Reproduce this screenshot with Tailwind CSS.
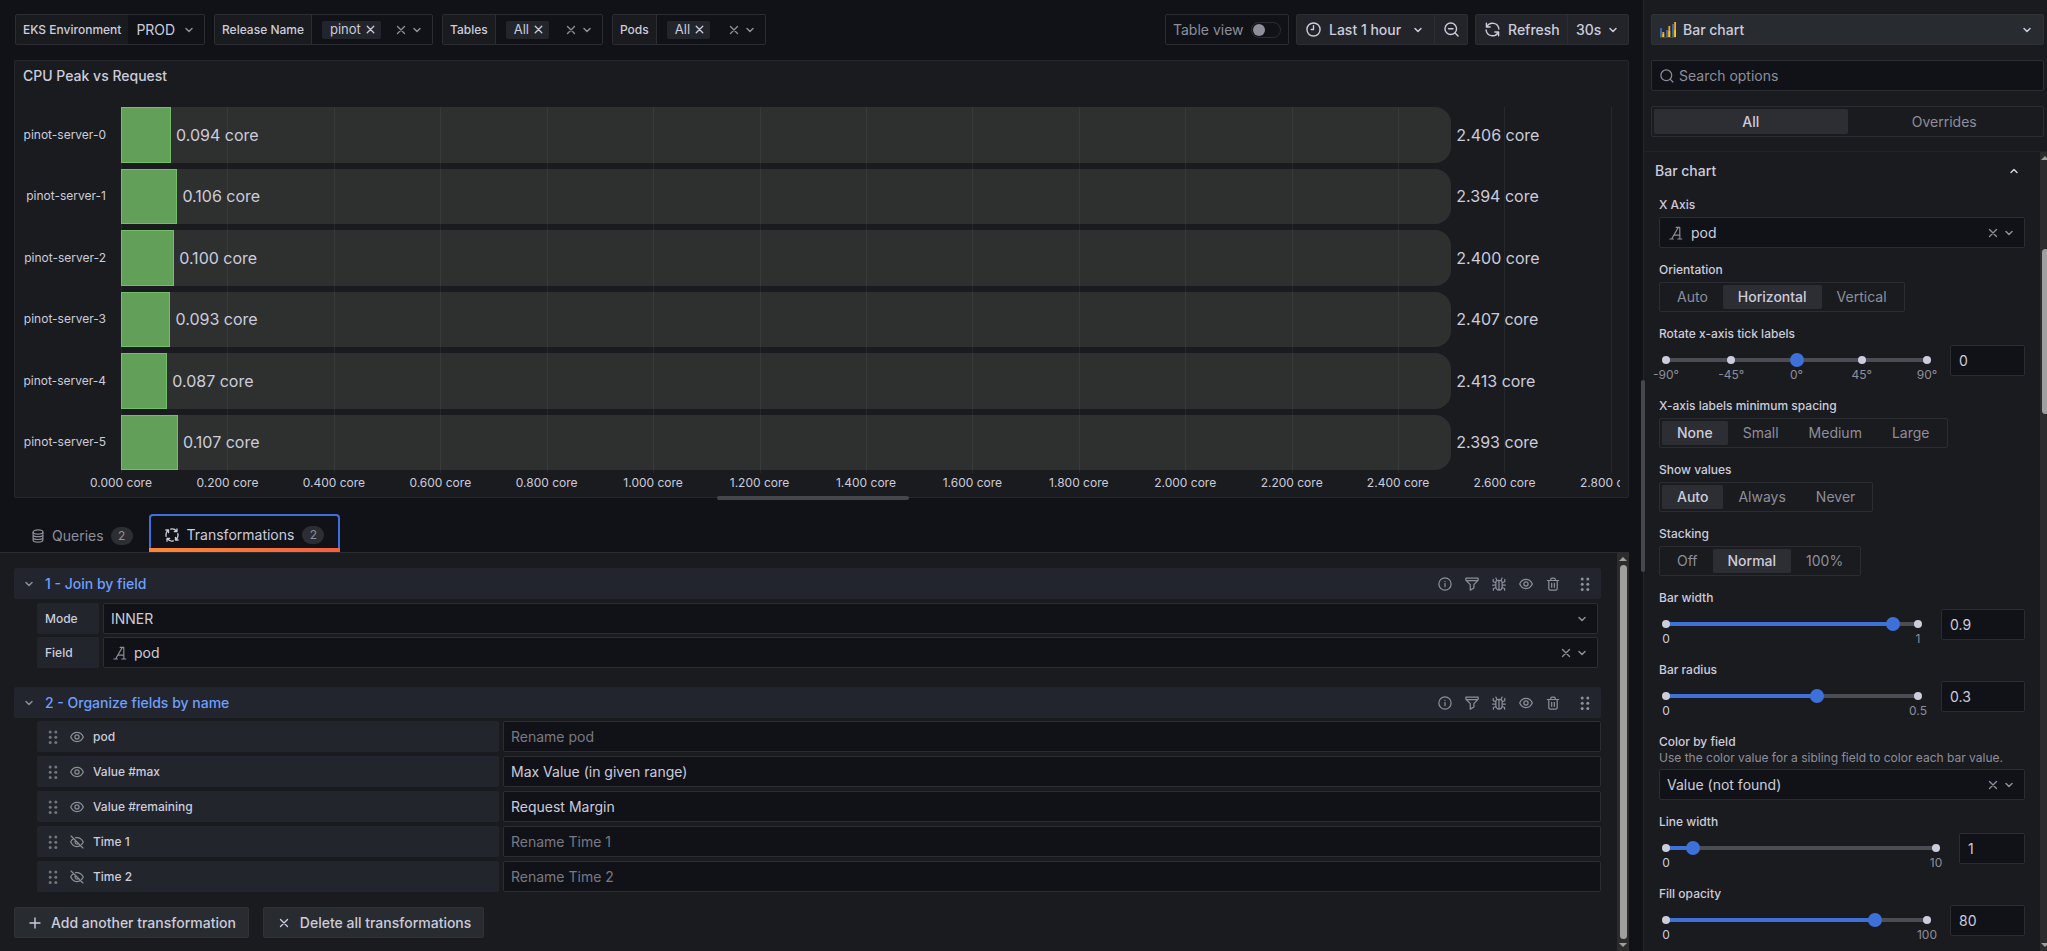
<!DOCTYPE html>
<html lang="en">

<head>
    <meta charset="UTF-8" />
    <meta name="viewport" content="width=device-width, initial-scale=1" />
    <title>CPU Peak vs Request - Edit panel</title>
    <script src="https://cdn.jsdelivr.net/npm/@tailwindcss/browser@4"></script>
</head>

<body class="h-screen overflow-hidden bg-[#111217] font-[Inter,'Liberation_Sans',sans-serif] text-sm text-[#ccccdc]">

    <!-- Icon sprite -->
    <svg class="hidden" xmlns="http://www.w3.org/2000/svg">
        <symbol id="chevron" viewBox="0 0 16 16" fill="none" stroke="currentColor" stroke-width="1.5" stroke-linecap="round" stroke-linejoin="round"><path d="M5 6.5l3 3 3-3" /></symbol>
        <symbol id="chevron-up" viewBox="0 0 16 16" fill="none" stroke="currentColor" stroke-width="1.5" stroke-linecap="round" stroke-linejoin="round"><path d="M5 9.5l3-3 3 3" /></symbol>
        <symbol id="times" viewBox="0 0 16 16" fill="none" stroke="currentColor" stroke-width="1.4" stroke-linecap="round"><path d="M4.5 4.5l7 7M11.5 4.5l-7 7" /></symbol>
        <symbol id="plus" viewBox="0 0 16 16" fill="none" stroke="currentColor" stroke-width="1.4" stroke-linecap="round"><path d="M8 3v10M3 8h10" /></symbol>
        <symbol id="clock" viewBox="0 0 16 16" fill="none" stroke="currentColor" stroke-width="1.5" stroke-linecap="round" stroke-linejoin="round"><circle cx="8" cy="8" r="7" /><path d="M8 4v4H5.6" /></symbol>
        <symbol id="zoom-out" viewBox="0 0 16 16" fill="none" stroke="currentColor" stroke-width="1.5" stroke-linecap="round"><circle cx="7.2" cy="7.2" r="6.2" /><path d="M11.8 11.8l3.2 3.2M4.8 7.2h4.8" /></symbol>
        <symbol id="search" viewBox="0 0 16 16" fill="none" stroke="currentColor" stroke-width="1.4" stroke-linecap="round"><circle cx="7.2" cy="7.2" r="6.2" /><path d="M11.8 11.8l3 3" /></symbol>
        <symbol id="sync" viewBox="0 0 16 16" fill="none" stroke="currentColor" stroke-width="1.5" stroke-linecap="round" stroke-linejoin="round"><path d="M1.5 1.3v4h4M14.5 14.7v-4h-4M2 5A6.8 6.8 0 0 1 14.8 7.5M14 11A6.8 6.8 0 0 1 1.2 8.5" /></symbol>
        <symbol id="database" viewBox="0 0 16 16" fill="none" stroke="currentColor" stroke-width="1.4"><ellipse cx="8" cy="3.4" rx="5.6" ry="2.4" /><path d="M2.4 3.4v9.2c0 1.3 2.5 2.4 5.6 2.4s5.6-1.1 5.6-2.4V3.4M2.4 6.6c0 1.2 2.5 2.2 5.6 2.2s5.6-1 5.6-2.2M2.4 9.8c0 1.2 2.5 2.2 5.6 2.2s5.6-1 5.6-2.2" /></symbol>
        <symbol id="process" viewBox="0 0 16 16" fill="none" stroke="currentColor" stroke-width="1.5" stroke-linecap="round" stroke-linejoin="round"><path d="M1.3 9.5C.7 6.9 1.7 4.3 3.6 2.7M1 2.3h3v3M6.5 1.3c2.6-.6 5.2.4 6.8 2.3M13.7 1v3h-3M14.7 6.5c.6 2.6-.4 5.2-2.3 6.8M15 13.7h-3v-3M9.5 14.7c-2.6.6-5.2-.4-6.8-2.3M2.3 15v-3h3" /></symbol>
        <symbol id="info" viewBox="0 0 16 16" fill="none" stroke="currentColor" stroke-width="1.4" stroke-linecap="round"><circle cx="8" cy="8" r="7" /><path d="M8 7.4v3.6M8 5v.1" /></symbol>
        <symbol id="filter" viewBox="0 0 16 16" fill="none" stroke="currentColor" stroke-width="1.4" stroke-linecap="round" stroke-linejoin="round"><path d="M1 1.2h14v2.4L10.2 8.8v3.8L6 15V8.8L1 3.6zM1.4 4.2h13.2" /></symbol>
        <symbol id="bug" viewBox="0 0 16 16" fill="none" stroke="currentColor" stroke-width="1.4" stroke-linecap="round" stroke-linejoin="round"><path d="M4.4 6c0-1.4 1.1-2.2 3.6-2.2s3.6.8 3.6 2.2v4.8c0 2.5-1.5 4.1-3.6 4.1s-3.6-1.6-3.6-4.1zM8 3.8v11M5.6 3.8L4.4 1.2M10.4 3.8l1.2-2.6M4.4 6.6L1.4 5.4V2.8M11.6 6.6l3-1.2V2.8M4.4 9.3H.8M11.6 9.3h3.6M4.6 12l-3 1.2V15M11.4 12l3 1.2V15" /></symbol>
        <symbol id="eye" viewBox="0 0 16 16" fill="none" stroke="currentColor" stroke-width="1.4" stroke-linejoin="round"><path d="M.8 8C2.3 4.6 5 2.8 8 2.8S13.7 4.6 15.2 8C13.7 11.4 11 13.2 8 13.2S2.3 11.4.8 8z" /><circle cx="8" cy="8" r="2.4" /></symbol>
        <symbol id="eye-slash" viewBox="0 0 16 16" fill="none" stroke="currentColor" stroke-width="1.4" stroke-linecap="round" stroke-linejoin="round"><path d="M1.2 1.2l13.6 13.6M6.4 3c3.7-.6 6.9 1.2 8.8 5-.5 1.1-1.2 2-2 2.8M3.7 4.3C2.5 5.2 1.5 6.5.8 8c2.1 4.2 6.1 6.1 10.3 4.5M6.2 6.4a2.4 2.4 0 0 0 3.3 3.4" /></symbol>
        <symbol id="trash" viewBox="0 0 16 16" fill="none" stroke="currentColor" stroke-width="1.4" stroke-linecap="round" stroke-linejoin="round"><path d="M1.5 4h13M3.2 4v9.2c0 1.1.7 1.8 1.8 1.8h6c1.1 0 1.8-.7 1.8-1.8V4M5.4 4V2.8c0-1 .6-1.6 1.6-1.6h2c1 0 1.6.6 1.6 1.6V4M6.5 7.2v4.6M9.5 7.2v4.6" /></symbol>
        <symbol id="drag" viewBox="0 0 16 16" fill="currentColor"><circle cx="5.2" cy="3" r="1.5" /><circle cx="10.8" cy="3" r="1.5" /><circle cx="5.2" cy="8.2" r="1.5" /><circle cx="10.8" cy="8.2" r="1.5" /><circle cx="5.2" cy="13.4" r="1.5" /><circle cx="10.8" cy="13.4" r="1.5" /></symbol>
        <symbol id="string-type" viewBox="0 0 16 16" fill="none" stroke="currentColor" stroke-width="1.3" stroke-linecap="round" stroke-linejoin="round"><path d="M1 14.8h4M10 14.8h4.6M3 14.8L10.6 1.6h1.7L12.4 14.8M8.2 1.6h4.1M5.6 10.4h6.8" /></symbol>
        <symbol id="barchart" viewBox="0 0 16 16"><path fill="#3865ab" d="M0 6h2v9H0zM6 8h2v7H6zM12 2h2v13h-2z" /><path fill="#f5a623" d="M2.4 10h1.8v5H2.4zM8.4 4h1.8v11H8.4zM14.2 0H16v15h-1.8z" /><path fill="#f2cc0c" d="M2.4 12h1.8v3H2.4zM8.4 9h1.8v6H8.4zM14.2 8H16v7h-1.8z" /><path fill="#2b4a80" d="M0 15h16v1H0z" /></symbol>
    </svg>

    <div class="flex h-full">

        <!-- Left side: toolbar, panel, transformations -->
        <main class="flex min-w-0 flex-1 flex-col">

            <!-- Toolbar -->
            <header class="mt-[14px] flex h-[31px] shrink-0 items-stretch justify-between whitespace-nowrap pl-[15px] pr-[14px]">
                <div class="flex gap-[9px]">
                    <div class="flex w-[190px] rounded-xs border border-[#2c2d33]">
                        <label for="env" class="flex items-center bg-[#1a1b1f] px-[7px] text-xs font-medium">EKS Environment</label>
                        <select id="env" class="min-w-0 flex-1 appearance-none bg-transparent pl-2 outline-none">
                            <option>PROD</option>
                        </select>
                        <svg class="mr-[7px] size-4 self-center text-[#8e8e9b]"><use href="#chevron" /></svg>
                    </div>
                    <div class="flex w-[219px] rounded-xs border border-[#2c2d33]">
                        <span class="flex items-center border-r border-[#2c2d33] bg-[#1a1b1f] px-[7px] text-xs font-medium">Release Name</span>
                        <div class="flex flex-1 items-center pl-[10px] pr-[7px] text-[#8e8e9b]">
                            <button class="flex h-[18px] items-center gap-[2px] rounded-xs bg-[#22252b] pl-2 pr-[3px] text-[13px] text-[#ccccdc]">pinot <svg class="size-[15px]"><use href="#times" /></svg></button>
                            <button class="ml-auto" aria-label="Clear release name"><svg class="size-4"><use href="#times" /></svg></button>
                            <button aria-label="Open release name"><svg class="size-4"><use href="#chevron" /></svg></button>
                        </div>
                    </div>
                    <div class="flex w-[161px] rounded-xs border border-[#2c2d33]">
                        <span class="flex items-center border-r border-[#2c2d33] bg-[#1a1b1f] px-[7px] text-xs font-medium">Tables</span>
                        <div class="flex flex-1 items-center pl-[10px] pr-[7px] text-[#8e8e9b]">
                            <button class="flex h-[18px] items-center gap-[2px] rounded-xs bg-[#22252b] pl-2 pr-[3px] text-[13px] text-[#ccccdc]">All <svg class="size-[15px]"><use href="#times" /></svg></button>
                            <button class="ml-auto" aria-label="Clear tables"><svg class="size-4"><use href="#times" /></svg></button>
                            <button aria-label="Open tables"><svg class="size-4"><use href="#chevron" /></svg></button>
                        </div>
                    </div>
                    <div class="flex w-[154px] rounded-xs border border-[#2c2d33]">
                        <span class="flex items-center border-r border-[#2c2d33] bg-[#1a1b1f] px-[7px] text-xs font-medium">Pods</span>
                        <div class="flex flex-1 items-center pl-[10px] pr-[7px] text-[#8e8e9b]">
                            <button class="flex h-[18px] items-center gap-[2px] rounded-xs bg-[#22252b] pl-2 pr-[3px] text-[13px] text-[#ccccdc]">All <svg class="size-[15px]"><use href="#times" /></svg></button>
                            <button class="ml-auto" aria-label="Clear pods"><svg class="size-4"><use href="#times" /></svg></button>
                            <button aria-label="Open pods"><svg class="size-4"><use href="#chevron" /></svg></button>
                        </div>
                    </div>
                </div>

                <div class="flex gap-[7px]">
                    <label class="flex w-[124px] items-center justify-between rounded-xs border border-[#2c2d33] px-[7px] text-[#8e8e9b]">
                        Table view
                        <input type="checkbox" class="h-4 w-[30px] appearance-none rounded-full border border-[#2c2d33] before:ml-px before:block before:size-3 before:translate-y-px before:rounded-full before:bg-[#8e8e9b]" />
                    </label>
                    <div class="flex rounded-xs border border-[#2c2d33] bg-[#22242a] font-medium">
                        <button class="flex w-[138px] items-center gap-2 border-r border-[#2c2d33] pl-[9px]">
                            <svg class="size-[15px]"><use href="#clock" /></svg>Last 1 hour<svg class="ml-auto mr-2 size-4"><use href="#chevron" /></svg>
                        </button>
                        <button class="flex w-8 items-center justify-center" aria-label="Zoom out time range"><svg class="size-[15px]"><use href="#zoom-out" /></svg></button>
                    </div>
                    <div class="flex rounded-xs border border-[#2c2d33] bg-[#22242a] font-medium">
                        <button class="flex w-[92px] items-center gap-2 border-r border-[#2c2d33] pl-[9px]"><svg class="size-[15px]"><use href="#sync" /></svg>Refresh</button>
                        <button class="flex w-[60px] items-center justify-between pl-2 pr-[7px]">30s<svg class="size-4"><use href="#chevron" /></svg></button>
                    </div>
                </div>
            </header>

            <!-- Panel -->
            <section class="relative mx-[14px] mt-[15px] flex min-h-0 flex-1 flex-col rounded-xs border border-[#26272d] bg-[#1a1b1f] px-2 pb-[5px]">
                <h2 class="flex h-[30px] items-center font-medium">CPU Peak vs Request</h2>
                <div class="mt-4 flex min-h-0 flex-1 flex-col overflow-hidden">
                    <div class="flex min-h-0 flex-1">
                        <div id="podNames" class="grid w-[98px] auto-rows-fr gap-[6px] pb-[3px] pr-[15px] text-right text-xs"></div>
                        <div class="grid min-w-0 flex-1 grid-cols-1 grid-rows-1">
                            <div id="gridLines" class="col-start-1 row-start-1 flex"></div>
                            <div id="bars" class="col-start-1 row-start-1 grid auto-rows-fr gap-[6px] pb-[3px] text-base"></div>
                        </div>
                    </div>
                    <div id="axis" class="ml-[98px] flex h-[19px] items-center text-xs leading-4"></div>
                </div>
                <div class="absolute -bottom-[3px] left-1/2 -ml-[105px] h-1 w-48 rounded-full bg-[#46474c]"></div>
            </section>

            <!-- Tabs -->
            <nav class="mt-4 flex h-[38px] shrink-0 px-[15px]">
                <button class="flex items-center gap-[7px] px-4 pt-[6px] text-[#8e8e9b]">
                    <svg class="size-[14px]"><use href="#database" /></svg>Queries<span class="flex h-[18px] w-[22px] items-center justify-center rounded-full bg-[#2d2e33] text-xs">2</span>
                </button>
                <button class="flex flex-col rounded-t border-2 border-b-0 border-[#3d71d9]">
                    <span class="flex flex-1 items-center gap-2 px-[14px] pt-[6px]"><svg class="size-[14px]"><use href="#process" /></svg>Transformations<span class="flex h-[18px] w-[22px] items-center justify-center rounded-full bg-[#2d2e33] text-xs text-[#8e8e9b]">2</span></span>
                    <span class="-mx-[2px] h-1 self-stretch bg-linear-to-r from-[#ff8833] to-[#f55f3e]"></span>
                </button>
            </nav>

            <!-- Transformations -->
            <section class="mr-[14px] flex shrink-0 border-t border-[#2c2d33] bg-[#1a1b1f]">
                <div class="min-w-0 flex-1 pb-[13px] pl-[14px] pr-4 pt-[15px]">
                    <div class="flex h-[31px] items-center rounded-xs bg-[#22252d] pl-[7px] pr-2 text-[#8e8e9b]">
                        <svg class="size-4"><use href="#chevron" /></svg>
                        <h3 class="ml-2 font-medium text-[#6e9fff]">1 - Join by field</h3>
                        <div class="ml-auto flex items-center gap-[13px]">
                            <button aria-label="Info"><svg class="size-[14px]"><use href="#info" /></svg></button>
                            <button aria-label="Filter"><svg class="size-[14px]"><use href="#filter" /></svg></button>
                            <button aria-label="Debug"><svg class="size-[14px]"><use href="#bug" /></svg></button>
                            <button aria-label="Disable"><svg class="size-[14px]"><use href="#eye" /></svg></button>
                            <button aria-label="Remove"><svg class="size-[14px]"><use href="#trash" /></svg></button>
                            <button class="ml-1" aria-label="Drag"><svg class="size-4"><use href="#drag" /></svg></button>
                        </div>
                    </div>
                    <div class="mt-1 flex flex-col gap-[3px] pl-[23px] pr-[3px]">
                        <div class="flex h-[31px] gap-1">
                            <label for="mode" class="flex w-[62px] items-center rounded-xs bg-[#22252b] pl-2 text-xs font-medium">Mode</label>
                            <div class="flex flex-1 items-center rounded-xs border border-[#2c2d33] bg-[#111217] pl-[7px] pr-[7px] text-[#8e8e9b]">
                                <select id="mode" class="flex-1 appearance-none bg-transparent text-[#ccccdc] outline-none">
                                    <option>INNER</option>
                                </select>
                                <svg class="size-4"><use href="#chevron" /></svg>
                            </div>
                        </div>
                        <div class="flex h-[31px] gap-1">
                            <label for="joinField" class="flex w-[62px] items-center rounded-xs bg-[#22252b] pl-2 text-xs font-medium">Field</label>
                            <div class="flex flex-1 items-center rounded-xs border border-[#2c2d33] bg-[#111217] pl-[9px] pr-[7px] text-[#8e8e9b]">
                                <svg class="mr-[7px] size-[14px]"><use href="#string-type" /></svg>
                                <select id="joinField" class="flex-1 appearance-none bg-transparent text-[#ccccdc] outline-none">
                                    <option>pod</option>
                                </select>
                                <button aria-label="Clear field"><svg class="size-4"><use href="#times" /></svg></button>
                                <svg class="size-4"><use href="#chevron" /></svg>
                            </div>
                        </div>
                    </div>

                    <div class="mt-[19px] flex h-[31px] items-center rounded-xs bg-[#22252d] pl-[7px] pr-2 text-[#8e8e9b]">
                        <svg class="size-4"><use href="#chevron" /></svg>
                        <h3 class="ml-2 font-medium text-[#6e9fff]">2 - Organize fields by name</h3>
                        <div class="ml-auto flex items-center gap-[13px]">
                            <button aria-label="Info"><svg class="size-[14px]"><use href="#info" /></svg></button>
                            <button aria-label="Filter"><svg class="size-[14px]"><use href="#filter" /></svg></button>
                            <button aria-label="Debug"><svg class="size-[14px]"><use href="#bug" /></svg></button>
                            <button aria-label="Disable"><svg class="size-[14px]"><use href="#eye" /></svg></button>
                            <button aria-label="Remove"><svg class="size-[14px]"><use href="#trash" /></svg></button>
                            <button class="ml-1" aria-label="Drag"><svg class="size-4"><use href="#drag" /></svg></button>
                        </div>
                    </div>
                    <div id="fields" class="mt-[3px] flex flex-col gap-1 pl-[23px]"></div>

                    <div class="mt-[15px] flex gap-[14px] font-medium">
                        <button class="flex h-[31px] items-center gap-2 rounded-xs border border-[#303238] bg-[#282b30] px-3"><svg class="size-4"><use href="#plus" /></svg>Add another transformation</button>
                        <button class="flex h-[31px] items-center gap-2 rounded-xs border border-[#303238] bg-[#282b30] px-3"><svg class="size-4"><use href="#times" /></svg>Delete all transformations</button>
                    </div>
                </div>
                <div class="flex w-3 flex-col items-center gap-1 bg-[#2c2c2c] py-1">
                    <div class="border-x-4 border-b-4 border-x-transparent border-b-[#9f9f9f]"></div>
                    <div class="w-[7px] flex-1 rounded-full bg-[#9f9f9f]"></div>
                    <div class="border-x-4 border-t-4 border-x-transparent border-t-[#9f9f9f]"></div>
                </div>
            </section>
        </main>

        <!-- Options pane -->
        <aside class="relative flex w-[404px] shrink-0 flex-col border-l border-[#26272d] bg-[#1a1b1f]">
            <div class="absolute -left-[3px] top-[40%] h-48 w-1 rounded-full bg-[#46474c]"></div>

            <div class="flex flex-col gap-[15px] pb-[14px] pl-[7px] pr-[3px] pt-[14px]">
                <button class="flex h-[31px] items-center gap-[7px] rounded-xs border border-[#303238] bg-[#282b30] pl-2 pr-2 font-medium">
                    <svg class="size-4"><use href="#barchart" /></svg>Bar chart<svg class="ml-auto size-4"><use href="#chevron" /></svg>
                </button>
                <label class="flex h-[31px] items-center gap-[5px] rounded-xs border border-[#2c2d33] bg-[#111217] pl-2 text-[#8e8e9b]">
                    <svg class="size-[14px]"><use href="#search" /></svg>
                    <input type="text" placeholder="Search options" class="flex-1 bg-transparent outline-none placeholder:text-[#8e8e9b]" />
                </label>
                <div class="flex h-[31px] rounded-xs border border-[#2c2d33] p-[2px] text-[#8e8e9b]">
                    <label class="flex flex-1 items-center justify-center rounded-xs has-checked:bg-[#2d2e33] has-checked:font-medium has-checked:text-[#ccccdc]"><input type="radio" name="tab" class="sr-only" checked />All</label>
                    <label class="flex flex-1 items-center justify-center rounded-xs"><input type="radio" name="tab" class="sr-only" />Overrides</label>
                </div>
            </div>

            <div class="flex min-h-0 flex-1 border-t border-[#222329]">
                <div class="min-w-0 flex-1 overflow-hidden pl-[11px] pr-[15px]">
                    <button class="flex h-[37px] w-full items-center justify-between pr-[3px] font-medium">Bar chart<svg class="size-4"><use href="#chevron-up" /></svg></button>

                    <div class="flex flex-col gap-[14px] pl-1 pt-2">
                        <div>
                            <label for="xAxis" class="block text-xs font-medium leading-4">X Axis</label>
                            <div class="mt-1 flex h-[31px] items-center rounded-xs border border-[#2c2d33] bg-[#111217] pl-[9px] pr-[7px] text-[#8e8e9b]">
                                <svg class="mr-2 size-[14px]"><use href="#string-type" /></svg>
                                <select id="xAxis" class="min-w-0 flex-1 appearance-none bg-transparent text-[#ccccdc] outline-none">
                                    <option>pod</option>
                                </select>
                                <button aria-label="Clear X axis"><svg class="size-4"><use href="#times" /></svg></button>
                                <svg class="size-4"><use href="#chevron" /></svg>
                            </div>
                        </div>

                        <fieldset>
                            <legend class="text-xs font-medium leading-4">Orientation</legend>
                            <div class="mt-1 inline-flex h-[30px] rounded-xs border border-[#2c2d33] p-[2px] align-top text-[#8e8e9b] *:flex *:items-center *:rounded-xs *:px-[15px] *:has-checked:bg-[#2d2e33] *:has-checked:font-medium *:has-checked:text-[#ccccdc]">
                                <label><input type="radio" name="orientation" class="sr-only" />Auto</label>
                                <label><input type="radio" name="orientation" class="sr-only" checked />Horizontal</label>
                                <label><input type="radio" name="orientation" class="sr-only" />Vertical</label>
                            </div>
                        </fieldset>

                        <div class="h-[58px]" data-slider="rotate" data-label="Rotate x-axis tick labels" data-min="-90" data-max="90" data-value="0" data-marks="-90°,-45°,0°,45°,90°"></div>

                        <fieldset>
                            <legend class="text-xs font-medium leading-4">X-axis labels minimum spacing</legend>
                            <div class="mt-1 inline-flex h-[30px] rounded-xs border border-[#2c2d33] p-[2px] align-top text-[#8e8e9b] *:flex *:items-center *:rounded-xs *:px-[15px] *:has-checked:bg-[#2d2e33] *:has-checked:font-medium *:has-checked:text-[#ccccdc]">
                                <label><input type="radio" name="spacing" class="sr-only" checked />None</label>
                                <label><input type="radio" name="spacing" class="sr-only" />Small</label>
                                <label><input type="radio" name="spacing" class="sr-only" />Medium</label>
                                <label><input type="radio" name="spacing" class="sr-only" />Large</label>
                            </div>
                        </fieldset>

                        <fieldset>
                            <legend class="text-xs font-medium leading-4">Show values</legend>
                            <div class="mt-1 inline-flex h-[30px] rounded-xs border border-[#2c2d33] p-[2px] align-top text-[#8e8e9b] *:flex *:items-center *:rounded-xs *:px-[15px] *:has-checked:bg-[#2d2e33] *:has-checked:font-medium *:has-checked:text-[#ccccdc]">
                                <label><input type="radio" name="values" class="sr-only" checked />Auto</label>
                                <label><input type="radio" name="values" class="sr-only" />Always</label>
                                <label><input type="radio" name="values" class="sr-only" />Never</label>
                            </div>
                        </fieldset>

                        <fieldset>
                            <legend class="text-xs font-medium leading-4">Stacking</legend>
                            <div class="mt-1 inline-flex h-[30px] rounded-xs border border-[#2c2d33] p-[2px] align-top text-[#8e8e9b] *:flex *:items-center *:rounded-xs *:px-[15px] *:has-checked:bg-[#2d2e33] *:has-checked:font-medium *:has-checked:text-[#ccccdc]">
                                <label><input type="radio" name="stacking" class="sr-only" />Off</label>
                                <label><input type="radio" name="stacking" class="sr-only" checked />Normal</label>
                                <label><input type="radio" name="stacking" class="sr-only" />100%</label>
                            </div>
                        </fieldset>

                        <div class="h-[58px]" data-slider="barWidth" data-label="Bar width" data-min="0" data-max="1" data-value="0.9" data-marks="0,1"></div>
                        <div class="h-[58px]" data-slider="barRadius" data-label="Bar radius" data-min="0" data-max="0.5" data-value="0.3" data-marks="0,0.5"></div>

                        <div>
                            <label for="colorBy" class="block text-xs font-medium leading-4">Color by field</label>
                            <p class="text-xs leading-4 text-[#8e8e9b]">Use the color value for a sibling field to color each bar value.</p>
                            <div class="mt-[3px] flex h-[31px] items-center rounded-xs border border-[#2c2d33] bg-[#111217] pl-[7px] pr-[7px] text-[#8e8e9b]">
                                <select id="colorBy" class="min-w-0 flex-1 appearance-none bg-transparent text-[#ccccdc] outline-none">
                                    <option>Value (not found)</option>
                                </select>
                                <button aria-label="Clear color field"><svg class="size-4"><use href="#times" /></svg></button>
                                <svg class="size-4"><use href="#chevron" /></svg>
                            </div>
                        </div>

                        <div class="h-[58px]" data-slider="lineWidth" data-label="Line width" data-min="0" data-max="10" data-value="1" data-marks="0,10"></div>
                        <div class="h-[58px]" data-slider="fillOpacity" data-label="Fill opacity" data-min="0" data-max="100" data-value="80" data-marks="0,100"></div>
                    </div>
                </div>
                <div class="flex w-[7px] flex-col items-start gap-1 overflow-hidden bg-[#2c2c2c] py-1">
                    <div class="ml-px border-x-4 border-b-4 border-x-transparent border-b-[#9f9f9f]"></div>
                    <div class="mt-[85px] ml-[2px] h-[165px] w-[7px] rounded-full bg-[#9f9f9f]"></div>
                    <div class="ml-px mt-auto border-x-4 border-t-4 border-x-transparent border-t-[#9f9f9f]"></div>
                </div>
            </div>
        </aside>
    </div>

    <script>
        // Chart: one axis step (0.2 core) takes 7.1% of the plot width
        const STEP = 7.1;
        const pods = [0.094, 0.106, 0.100, 0.093, 0.087, 0.107];
        const request = 2.5;
        const pct = (cores) => (cores / 0.2) * STEP + '%';

        document.getElementById('podNames').innerHTML = pods.map((_, i) =>
            `<div class="flex items-center justify-end whitespace-nowrap">pinot-server-${i}</div>`).join('');

        document.getElementById('bars').innerHTML = pods.map((used) => `
            <div class="flex items-center whitespace-nowrap">
                <div class="h-full shrink-0 border border-[#73bf69] bg-[#629f59]" style="width: ${pct(used)}"></div>
                <div class="flex h-full shrink-0 items-center rounded-r-2xl bg-[#75796c]/22 pl-[5px]" style="width: ${pct(request - used)}">${used.toFixed(3)} core</div>
                <div class="pl-[5px]">${(request - used).toFixed(3)} core</div>
            </div>`).join('');

        const ticks = Array.from({ length: 15 }, (_, i) => i * 0.2);
        document.getElementById('gridLines').innerHTML = ticks.map(() =>
            `<div class="shrink-0 border-l border-[#27282c]" style="width: ${STEP}%"></div>`).join('');
        document.getElementById('axis').innerHTML = ticks.map((t) =>
            `<div class="shrink-0" style="width: ${STEP}%"><span class="inline-block -translate-x-1/2 whitespace-nowrap">${t.toFixed(3)} core</span></div>`).join('');

        // Organize fields rows
        const fields = [
            { name: 'pod', rename: '', icon: 'eye' },
            { name: 'Value #max', rename: 'Max Value (in given range)', icon: 'eye' },
            { name: 'Value #remaining', rename: 'Request Margin', icon: 'eye' },
            { name: 'Time 1', rename: '', icon: 'eye-slash' },
            { name: 'Time 2', rename: '', icon: 'eye-slash' },
        ];
        document.getElementById('fields').innerHTML = fields.map((f, i) => `
            <div class="flex h-[31px] gap-1">
                <div class="flex w-[462px] shrink-0 items-center gap-[9px] rounded-xs bg-[#22252b] pl-2 text-[#8e8e9b]">
                    <svg class="size-4 text-[#74757f]"><use href="#drag" /></svg>
                    <button aria-label="Toggle ${f.name}"><svg class="size-[14px]"><use href="#${f.icon}" /></svg></button>
                    <label for="field${i}" class="text-xs font-medium text-[#ccccdc]">${f.name}</label>
                </div>
                <input id="field${i}" type="text" value="${f.rename}" placeholder="Rename ${f.name}" class="min-w-0 flex-1 rounded-xs border border-[#2c2d33] bg-[#111217] px-[7px] outline-none placeholder:text-[#787983]" />
            </div>`).join('');

        // Sliders
        const boxWidth = { rotate: 'w-[75px]', barWidth: 'w-[84px]', barRadius: 'w-[84px]', lineWidth: 'w-[66px]', fillOpacity: 'w-[75px]' };
        document.querySelectorAll('[data-slider]').forEach((el) => {
            const { slider, label, min, max, value, marks } = el.dataset;
            const list = marks.split(',');
            const fill = slider === 'rotate' ? 0 : ((value - min) / (max - min)) * 100;
            el.innerHTML = `
                <label for="${slider}" class="block text-xs font-medium leading-4">${label}</label>
                <div class="mt-[3px] flex gap-4">
                    <div class="flex-1 pt-2">
                        <div class="relative h-[14px]">
                            <div class="absolute inset-x-[7px] top-[5px] h-1 bg-[#4b4c54]"><div class="h-full bg-[#3d71d9]" style="width: ${fill}%"></div></div>
                            <div class="absolute inset-x-[3px] top-[3px] flex justify-between">${list.map(() => '<span class="size-2 rounded-full bg-[#ccccdc]"></span>').join('')}</div>
                            <input id="${slider}" type="range" min="${min}" max="${max}" step="any" value="${value}" class="absolute inset-0 h-[14px] w-full appearance-none bg-transparent [&::-webkit-slider-thumb]:size-[14px] [&::-webkit-slider-thumb]:appearance-none [&::-webkit-slider-thumb]:rounded-full [&::-webkit-slider-thumb]:bg-[#3d71d9]" />
                        </div>
                        <div class="flex justify-between px-[7px] text-xs leading-4 text-[#8e8e9b]">${list.map((m, i) =>
                            `<span class="flex w-0 justify-center ${fill && i === 0 ? 'text-[#ccccdc]' : ''}">${m}</span>`).join('')}</div>
                    </div>
                    <input type="text" value="${value}" aria-label="${label}" class="${boxWidth[slider]} h-[31px] rounded-xs border border-[#2c2d33] bg-[#111217] px-2 outline-none" />
                </div>`;
        });
    </script>
</body>

</html>
